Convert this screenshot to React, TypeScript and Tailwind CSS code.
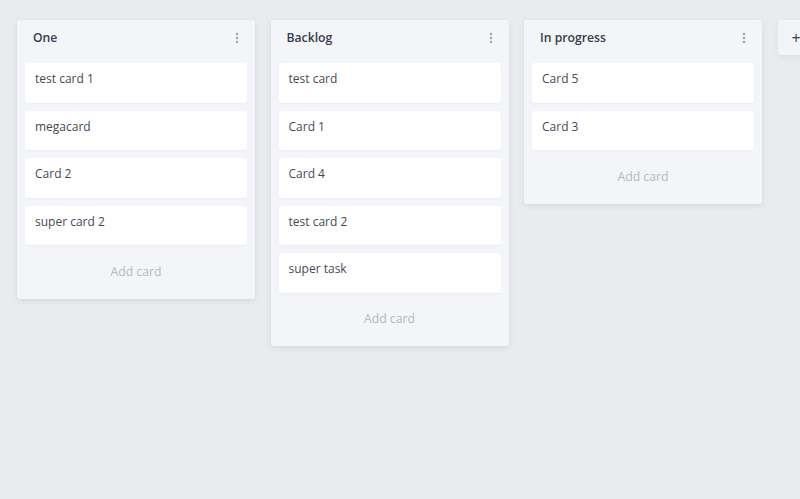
import React from "react";

const columns = [
  { title: "One", cards: ["test card 1", "megacard", "Card 2", "super card 2"] },
  { title: "Backlog", cards: ["test card", "Card 1", "Card 4", "test card 2", "super task"] },
  { title: "In progress", cards: ["Card 5", "Card 3"] },
];

function Dots() {
  return (
    <svg width="4" height="12" viewBox="0 0 4 12" className="text-[#a3a8b0]">
      <circle cx="2" cy="2" r="1.3" fill="currentColor" />
      <circle cx="2" cy="6" r="1.3" fill="currentColor" />
      <circle cx="2" cy="10" r="1.3" fill="currentColor" />
    </svg>
  );
}

export default function App() {
  return (
    <div
      className="w-[800px] h-[499px] overflow-hidden bg-[#eaebee] text-[#3a3f4b]"
      style={{ fontFamily: '"Open Sans", "Noto Sans", sans-serif' }}
    >
      <div className="flex items-start gap-[15.5px] pl-[17px] pt-[20px]">
        {columns.map((col) => (
          <div
            key={col.title}
            className="w-[238px] shrink-0 rounded-[3px] bg-gradient-to-b from-[#f3f5f8] to-[#f4f5f8] shadow-[0_2px_6px_rgba(0,0,0,0.08)]"
          >
            <div className="flex h-[43px] items-start justify-between pl-4 pr-[16px] pt-[10px]">
              <span className="text-[12.2px] leading-[16px] font-semibold text-[#363c4a]">{col.title}</span>
              <span className="pt-[2px]">
                <Dots />
              </span>
            </div>
            <div className="flex flex-col gap-2 px-2">
              {col.cards.map((c) => (
                <div
                  key={c}
                  className="h-[39.5px] rounded-[3px] bg-white px-[10px] pt-[8px] text-[12px] leading-[16px] text-[#454a56] shadow-[0_1px_2px_rgba(0,0,0,0.04)]"
                >
                  {c}
                </div>
              ))}
            </div>
            <div className="flex h-[53.5px] items-center justify-center text-[12.25px] text-[#b4b8bf]">
              Add card
            </div>
          </div>
        ))}
        <div className="flex h-[35px] w-[40px] shrink-0 items-center rounded-[3px] bg-[#f3f4f7] pl-[14px] text-[16px] text-[#3a3f4b] shadow-[0_2px_6px_rgba(0,0,0,0.06)]">
          +
        </div>
      </div>
    </div>
  );
}
